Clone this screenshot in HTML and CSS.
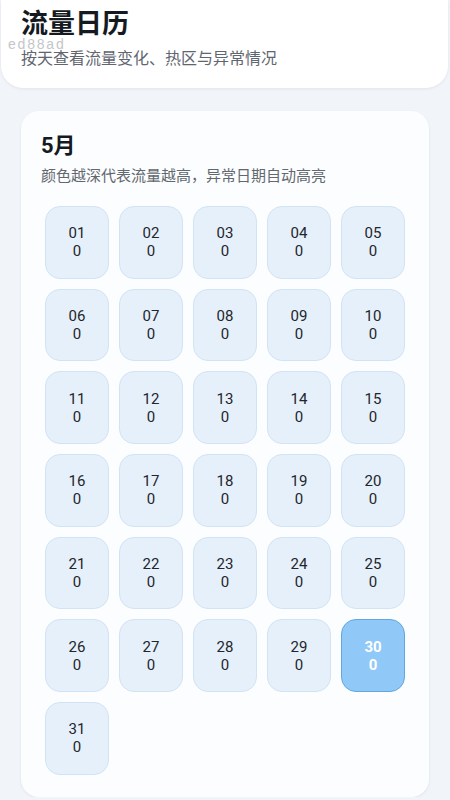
FILE: index.html
```html
<!DOCTYPE html>
<html lang="zh-CN">
<head>
  <meta charset="UTF-8">
  <title>流量日历</title>
  <link rel="stylesheet" href="styles.css">
</head>
<body>
  <div class="header">
    <h1>流量日历</h1>
    <p>按天查看流量变化、热区与异常情况</p>
    <span class="tag">ed88ad</span>
  </div>

  <div class="card">
    <h2>5月</h2>
    <p class="desc">颜色越深代表流量越高，异常日期自动高亮</p>
    <div class="grid">
      <div class="day"><span>01</span><span>0</span></div>
      <div class="day"><span>02</span><span>0</span></div>
      <div class="day"><span>03</span><span>0</span></div>
      <div class="day"><span>04</span><span>0</span></div>
      <div class="day"><span>05</span><span>0</span></div>
      <div class="day"><span>06</span><span>0</span></div>
      <div class="day"><span>07</span><span>0</span></div>
      <div class="day"><span>08</span><span>0</span></div>
      <div class="day"><span>09</span><span>0</span></div>
      <div class="day"><span>10</span><span>0</span></div>
      <div class="day"><span>11</span><span>0</span></div>
      <div class="day"><span>12</span><span>0</span></div>
      <div class="day"><span>13</span><span>0</span></div>
      <div class="day"><span>14</span><span>0</span></div>
      <div class="day"><span>15</span><span>0</span></div>
      <div class="day"><span>16</span><span>0</span></div>
      <div class="day"><span>17</span><span>0</span></div>
      <div class="day"><span>18</span><span>0</span></div>
      <div class="day"><span>19</span><span>0</span></div>
      <div class="day"><span>20</span><span>0</span></div>
      <div class="day"><span>21</span><span>0</span></div>
      <div class="day"><span>22</span><span>0</span></div>
      <div class="day"><span>23</span><span>0</span></div>
      <div class="day"><span>24</span><span>0</span></div>
      <div class="day"><span>25</span><span>0</span></div>
      <div class="day"><span>26</span><span>0</span></div>
      <div class="day"><span>27</span><span>0</span></div>
      <div class="day"><span>28</span><span>0</span></div>
      <div class="day"><span>29</span><span>0</span></div>
      <div class="day today"><span>30</span><span>0</span></div>
      <div class="day"><span>31</span><span>0</span></div>
    </div>
  </div>
</body>
</html>
```

FILE: styles.css
```css
body { margin: 0; background: #f1f4f9; font-family: Roboto, "Noto Sans CJK SC", sans-serif; color: #1f2329; }
.header { position: relative; margin: 0 2px 0 1px; padding: 12px 20px 20px; background: #fff; border-radius: 0 0 22px 22px; box-shadow: 0 1px 3px rgba(30, 50, 90, 0.08); }
.header h1 { margin: 0; font-size: 27px; line-height: 25px; font-weight: 700; color: #151a22; }
.header p { margin: 13px 0 0; font-size: 16px; line-height: 18px; color: #5f6670; }
.tag { position: absolute; left: 7px; top: 39px; font-family: "Liberation Sans", sans-serif; font-size: 14px; line-height: 10px; letter-spacing: 1.8px; color: #c4c6c9; }
.card { margin: 23px 21px 0; padding: 20px 20px 22px; background: #fcfdfe; border-radius: 18px; box-shadow: 0 1px 3px rgba(30, 50, 90, 0.08); }
.card h2 { margin: 0; font-size: 22px; line-height: 30px; font-weight: 700; color: #151a22; }
.desc { margin: 4px 0 0; font-size: 15px; line-height: 22px; color: #62686f; }
.grid { display: grid; grid-template-columns: repeat(5, 64px); grid-auto-rows: 72.7px; column-gap: 10px; row-gap: 10px; margin: 19px 4px 0; }
.day { display: flex; flex-direction: column; align-items: center; justify-content: center; background: #e6f0fb; border: 1px solid #d2e3f3; border-radius: 15px; font-size: 15px; line-height: 18px; color: #22262b; box-sizing: border-box; }
.day.today { background: #90c8f8; border-color: #62a8de; color: #fff; font-weight: 700; }
```
